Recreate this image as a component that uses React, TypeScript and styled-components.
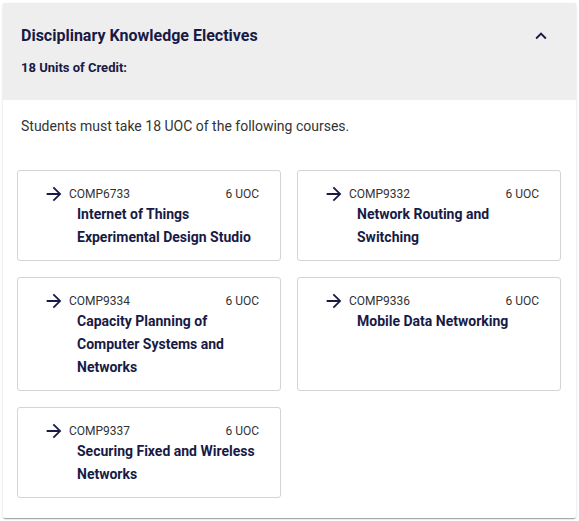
import React, { FC } from 'react';
import styled, { createGlobalStyle } from 'styled-components';

const GlobalStyle = createGlobalStyle`
  body {
    margin: 0;
    background: #ffffff;
    font-family: Roboto, 'Liberation Sans', sans-serif;
  }
`;

const Page = styled.div`
  padding: 3px 3px 4px 3px;
`;

const Panel = styled.section`
  background: #ffffff;
  border-radius: 2px;
  box-shadow: 0px 2px 1px -1px rgba(0, 0, 0, 0.2), 0px 1px 1px 0px rgba(0, 0, 0, 0.14),
    0px 1px 3px 0px rgba(0, 0, 0, 0.12);
`;

const Header = styled.div`
  display: flex;
  justify-content: space-between;
  align-items: flex-start;
  height: 97px;
  box-sizing: border-box;
  padding: 22px 23px 0 18px;
  background: #eeeeee;
`;

const HeaderText = styled.div`
  display: flex;
  flex-direction: column;
  gap: 12px;
`;

const Title = styled.h2`
  margin: 0;
  font-size: 16px;
  line-height: 22px;
  font-weight: 700;
  color: #181a45;
`;

const Subtitle = styled.p`
  margin: 0;
  font-size: 13px;
  line-height: 18px;
  font-weight: 700;
  color: #181a45;
`;

const ToggleButton = styled.button`
  display: flex;
  align-items: center;
  justify-content: center;
  width: 24px;
  height: 24px;
  margin-top: -1px;
  padding: 0;
  border: none;
  background: transparent;
  color: #181a45;
`;

const Body = styled.div`
  padding: 16px 15px 20px 14px;
`;

const Description = styled.p`
  margin: 0 0 34px 4px;
  font-size: 14px;
  line-height: 20px;
  color: #333333;
`;

const Grid = styled.div`
  display: grid;
  grid-template-columns: 1fr 1fr;
  column-gap: 16px;
  row-gap: 16px;
`;

const Card = styled.div`
  box-sizing: border-box;
  border: 1px solid #d4d4d4;
  border-radius: 3px;
  padding: 14px 21px 11px 25px;
`;

const CodeRow = styled.div`
  display: flex;
  align-items: center;
  height: 18px;
`;

const Arrow = styled.span`
  display: flex;
  width: 22px;
  height: 22px;
  margin-right: 4px;
  color: #181a45;
`;

const Code = styled.span`
  flex: 1;
  font-size: 12px;
  color: #333333;
`;

const Units = styled.span`
  font-size: 12px;
  color: #333333;
`;

const CourseName = styled.div`
  margin-left: 34px;
  font-size: 14px;
  line-height: 23px;
  font-weight: 700;
  color: #181a45;
`;

const ArrowIcon: FC = () => (
  <svg width="22" height="22" viewBox="0 0 24 24" fill="currentColor">
    <path d="M12 4l-1.41 1.41L16.17 11H4v2h12.17l-5.58 5.59L12 20l8-8z" />
  </svg>
);

const ChevronUp: FC = () => (
  <svg width="22" height="22" viewBox="0 0 24 24" fill="currentColor">
    <path d="M12 8l-6 6 1.41 1.41L12 10.83l4.59 4.58L18 14z" />
  </svg>
);

interface Course {
  code: string;
  name: string;
  uoc: number;
}

const courses: Course[] = [
  { code: 'COMP6733', name: 'Internet of Things Experimental Design Studio', uoc: 6 },
  { code: 'COMP9332', name: 'Network Routing and Switching', uoc: 6 },
  { code: 'COMP9334', name: 'Capacity Planning of Computer Systems and Networks', uoc: 6 },
  { code: 'COMP9336', name: 'Mobile Data Networking', uoc: 6 },
  { code: 'COMP9337', name: 'Securing Fixed and Wireless Networks', uoc: 6 },
];

const CourseCard: FC<{ course: Course }> = ({ course }) => (
  <Card>
    <CodeRow>
      <Arrow>
        <ArrowIcon />
      </Arrow>
      <Code>{course.code}</Code>
      <Units>{course.uoc} UOC</Units>
    </CodeRow>
    <CourseName>{course.name}</CourseName>
  </Card>
);

const App: FC = () => {
  return (
    <Page>
      <GlobalStyle />
      <Panel>
        <Header>
          <HeaderText>
            <Title>Disciplinary Knowledge Electives</Title>
            <Subtitle>18 Units of Credit:</Subtitle>
          </HeaderText>
          <ToggleButton aria-label="collapse">
            <ChevronUp />
          </ToggleButton>
        </Header>
        <Body>
          <Description>Students must take 18 UOC of the following courses.</Description>
          <Grid>
            {courses.map((c) => (
              <CourseCard key={c.code} course={c} />
            ))}
          </Grid>
        </Body>
      </Panel>
    </Page>
  );
};

export default App;
